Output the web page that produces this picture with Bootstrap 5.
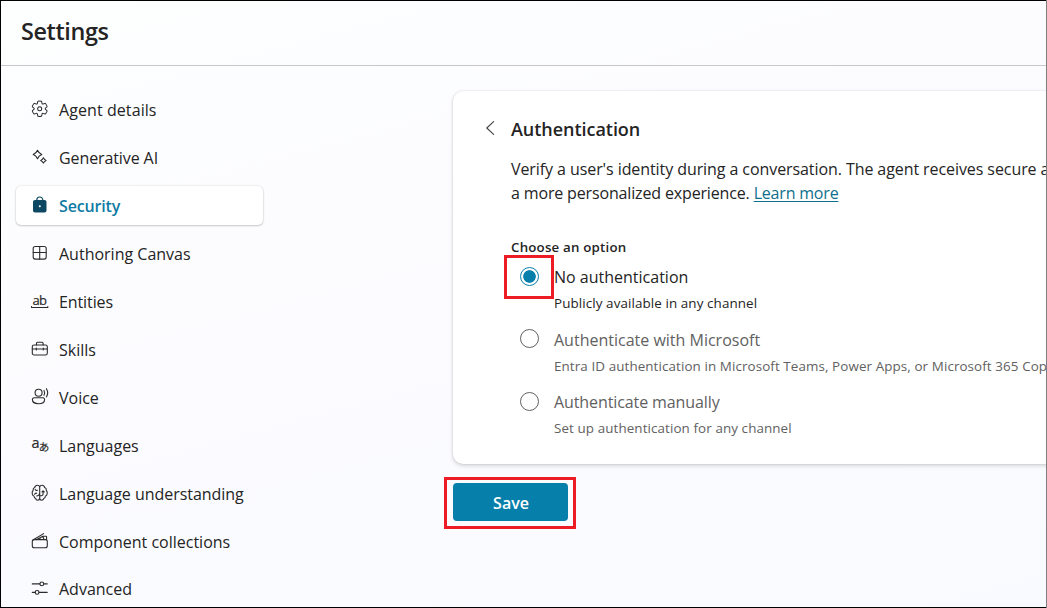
<!DOCTYPE html>
<html lang="en">
<head>
<meta charset="utf-8">
<meta name="viewport" content="width=device-width, initial-scale=1">
<title>Settings</title>
<link href="https://cdn.jsdelivr.net/npm/bootstrap@5.3.0/dist/css/bootstrap.min.css" rel="stylesheet">
<style>
html,body{height:100%;overflow:hidden}
body{font-family:"Open Sans","Noto Sans",sans-serif;font-size:16px;line-height:24px;color:#242424;background:#fbfbff}
.frame{height:608px;border:1px solid #000;border-right:0;background:linear-gradient(165deg,#fdfefe 0%,#fcfcff 40%,#f9faff 100%)}
.frame::after{content:"";position:absolute;top:0;right:0;bottom:0;width:1px;background:#7f7f7f}
.topbar{height:65px;border-bottom:1px solid #c8c8cb;padding:14px 0 0 20px}
.topbar h1{font-size:23.4px;line-height:32px;font-weight:600;letter-spacing:-.38px}

.side{width:247px;margin:24px 0 0 15px;gap:9px}
.side .nav-link{height:39px;padding:0 0 0 14px;color:#242424;border-radius:5px;gap:9px;white-space:nowrap}
.side .nav-link.active{background:#fff;color:#0f7ba5;font-weight:600;letter-spacing:-.15px;box-shadow:0 0 2px rgba(0,0,0,.16),0 1px 2px rgba(0,0,0,.18)}
.side .nav-link:last-child{margin-top:-1px}
.side svg{width:20px;height:20px;flex:none;fill:none;stroke:#2b2b2b;stroke-width:1.1;stroke-linecap:round;stroke-linejoin:round;margin-top:-2px;overflow:visible}
.side svg text{fill:#2b2b2b;stroke:#2b2b2b;stroke-width:.2}
.wide{letter-spacing:.08px}
.tight{letter-spacing:-.1px}

.main{margin:25px 0 0 190px;width:594px}
.panel{height:373px;width:640px;background:#fff;border-radius:10px;box-shadow:0 0 2px rgba(0,0,0,.14),0 2px 4px rgba(0,0,0,.15);padding:26px 0 0 33px;white-space:nowrap}
.panel h2{font-size:18px;line-height:24px;font-weight:600;letter-spacing:-.04px}
.chevron{width:9px;height:14px;fill:none;stroke:#424242;stroke-width:1.1;stroke-linecap:round;stroke-linejoin:round;margin-top:-2px}
.panel-text{margin-left:25px}
.lead-1{letter-spacing:-.08px}
.lead-2{letter-spacing:-.15px}
.lead-2 a{color:#0f6f8c;letter-spacing:-.19px;text-underline-offset:2px;text-decoration-thickness:1px}
.choose{font-size:13.3px;line-height:20px;font-weight:600;letter-spacing:.2px;margin:32px 0 8px}
.option{height:48px;margin-left:9px;gap:15px}
.option + .option{margin-top:15px}
.option:last-child{margin-top:14px}
.radio{width:19px;height:19px;border:1px solid #616161;border-radius:50%;margin-top:2px;flex:none}
.radio.on{border-color:#077fab;background:radial-gradient(circle,#077fab 5.9px,#fff 6.6px)}
.option:nth-last-child(2) .radio{margin-top:1px}
.fine{font-size:13.4px;line-height:20px;letter-spacing:.1px;margin-top:4px}
.dim{color:#616161}
.ring{position:absolute;left:-16px;top:-10px;width:50px;height:44px;border:3px solid #ed1c24}
.save-ring{width:132px;height:52px;border:3px solid #ed1c24;padding:3px 0 0 6px;margin:13px 0 0 -9px}
.save-ring .btn{width:115px;height:38px;padding:2px 0 0 1px;background:#077fab;border:0;border-radius:4px;color:#fff;font-weight:600;line-height:36px}
</style>
</head>
<body>
<div class="frame">
<header class="topbar"><h1 class="m-0">Settings</h1></header>
<div class="d-flex">
<nav class="nav flex-column flex-shrink-0 side">
<a class="nav-link d-flex align-items-center"><svg viewBox="0 0 20 20"><g transform="translate(.6 .6) scale(.91)"><path d="M1.91 7.38A8.5 8.5 0 0 1 3.7 4.3a.5.5 0 0 1 .54-.13l1.92.68a1 1 0 0 0 1.32-.76l.36-2a.5.5 0 0 1 .4-.4 8.53 8.53 0 0 1 3.55 0c.2.04.35.2.38.4l.37 2a1 1 0 0 0 1.32.76l1.92-.68a.5.5 0 0 1 .54.13 8.5 8.5 0 0 1 1.78 3.08c.06.2 0 .4-.15.54l-1.56 1.32a1 1 0 0 0 0 1.52l1.56 1.32a.5.5 0 0 1 .15.54 8.5 8.5 0 0 1-1.78 3.08.5.5 0 0 1-.54.13l-1.92-.68a1 1 0 0 0-1.32.76l-.37 2a.5.5 0 0 1-.38.4 8.53 8.53 0 0 1-3.56 0 .5.5 0 0 1-.39-.4l-.36-2a1 1 0 0 0-1.32-.76l-1.92.68a.5.5 0 0 1-.54-.13 8.5 8.5 0 0 1-1.78-3.08.5.5 0 0 1 .15-.54l1.56-1.32a1 1 0 0 0 0-1.52L2.06 7.92a.5.5 0 0 1-.15-.54Z"/><circle cx="10" cy="10" r="2.2"/></g></svg><span class="wide">Agent details</span></a>
<a class="nav-link d-flex align-items-center"><svg viewBox="0 0 20 20"><path d="M7.5 3.2Q8.7 6.3 11.8 7.5 8.7 8.7 7.5 11.8 6.3 8.7 3.2 7.5 6.3 6.3 7.5 3.2ZM13.4 10.7Q14.2 12.6 16.1 13.4 14.2 14.2 13.4 16.1 12.6 14.2 10.7 13.4 12.6 12.6 13.4 10.7Z"/></svg><span class="tight">Generative AI</span></a>
<a class="nav-link d-flex align-items-center active"><svg viewBox="0 0 20 20"><path d="M6.8 6V5a3 3 0 0 1 6 0V6" stroke="#0c4862" stroke-width="1.2"/><rect x="3" y="5" width="13.5" height="12.4" rx="2" fill="#0c4862" stroke="none"/><circle cx="9.8" cy="11.2" r="1" fill="#fff" stroke="none"/></svg><span>Security</span></a>
<a class="nav-link d-flex align-items-center"><svg viewBox="0 0 20 20"><rect x="3.2" y="3.5" width="13" height="12.6" rx="2"/><path d="M9.7 3.5v12.6M3.2 9.5h13"/></svg><span>Authoring Canvas</span></a>
<a class="nav-link d-flex align-items-center"><svg viewBox="0 0 20 20"><text x="2.4" y="14" font-size="13" textLength="14.5">ab</text><path d="M1.5 15.5v1h16.3v-1"/></svg><span class="tight">Entities</span></a>
<a class="nav-link d-flex align-items-center"><svg viewBox="0 0 20 20"><rect x="2.3" y="6" width="15" height="10" rx="1.8"/><path d="M6.5 6V4.3q0-1 1-1h4.6q1 0 1 1V6M2.3 10h15M6.3 9.1v1.8M13.3 9.1v1.8"/></svg><span>Skills</span></a>
<a class="nav-link d-flex align-items-center"><svg viewBox="0 0 20 20"><circle cx="8.6" cy="5.7" r="3.5"/><path d="M4 10.8h9a1.6 1.6 0 0 1 1.6 1.6c0 2.6-2.6 4.3-6.1 4.3s-6.1-1.7-6.1-4.3A1.6 1.6 0 0 1 4 10.8ZM14 3.4q1.3 2.4 0 4.8M16.4 1.7q2.6 4.2 0 8.2"/></svg><span>Voice</span></a>
<a class="nav-link d-flex align-items-center"><svg viewBox="0 0 20 20"><text x="1.4" y="12.5" font-size="14.5">a</text><text x="8.8" y="16" font-size="10.5" font-family="Noto Sans CJK JP,sans-serif">あ</text></svg><span>Languages</span></a>
<a class="nav-link d-flex align-items-center"><svg viewBox="0 0 20 20"><path d="M9.7 4.1Q9.3 2.3 7.4 2.3 5.2 2.3 4.7 4.6 2.8 5.2 3.1 7.4 1.7 8.8 2.3 11.1 2.7 12.7 3.9 13 4.2 15 5.6 15.5 6.2 17.3 7.8 17.2 9.4 17 9.7 15.3ZM9.7 4.1Q10.1 2.3 12 2.3 14.2 2.3 14.7 4.6 16.6 5.2 16.3 7.4 17.7 8.8 17.1 11.1 16.7 12.7 15.5 13 15.2 15 13.8 15.5 13.2 17.3 11.6 17.2 10 17 9.7 15.3ZM5.2 6.4Q6 8 7.4 7.3M4.6 11.3Q5.2 9.7 6.8 10.2M9.5 10.5Q9.2 12.7 6.6 13M10 12.7h1.6q1.5-.2 1.5-2V8.3M12 8.9l1.1-1.1 1.2 1.1"/></svg><span style="letter-spacing:-.04px">Language understanding</span></a>
<a class="nav-link d-flex align-items-center"><svg viewBox="0 0 20 20"><rect x="2.3" y="8.6" width="15" height="8.2" rx="2"/><path d="M3 9 13.6 2.6M6.8 8.6l6-3.3 1.3 3.3M9.7 7.2l.8 1.4M12.8 5.3h3q.8 0 .8.8v2.7"/></svg><span>Component collections</span></a>
<a class="nav-link d-flex align-items-center"><svg viewBox="0 0 20 20"><path d="M2.3 5.9h7.5M13.8 5.9h3.4M2.3 14.4h2.8M9.1 14.4h8.1"/><circle cx="11.8" cy="5.9" r="1.9"/><circle cx="7.1" cy="14.4" r="1.9"/></svg><span>Advanced</span></a>
</nav>
<main class="main flex-shrink-0">
<section class="panel">
<div class="d-flex align-items-center gap-3"><svg class="chevron" viewBox="0 0 9 14"><path d="M7.6.6.8 7l6.8 6.4"/></svg><h2 class="m-0">Authentication</h2></div>
<div class="panel-text">
<div class="lead-1 mt-3">Verify a user's identity during a conversation. The agent receives secure a</div>
<div class="lead-2">a more personalized experience. <a href="#">Learn more</a></div>
<div class="choose">Choose an option</div>
<div class="option d-flex position-relative"><div class="radio on"></div><div class="ring"></div><div>No authentication<div class="fine">Publicly available in any channel</div></div></div>
<div class="option d-flex dim"><div class="radio"></div><div>Authenticate with Microsoft<div class="fine">Entra ID authentication in Microsoft Teams, Power Apps, or Microsoft 365 Cop</div></div></div>
<div class="option d-flex dim"><div class="radio"></div><div><span class="tight">Authenticate manually</span><div class="fine">Set up authentication for any channel</div></div></div>
</div>
</section>
<div class="save-ring"><button class="btn d-block" type="button">Save</button></div>
</main>
</div>
</div>
<script src="https://cdn.jsdelivr.net/npm/bootstrap@5.3.0/dist/js/bootstrap.bundle.min.js"></script>
</body>
</html>
